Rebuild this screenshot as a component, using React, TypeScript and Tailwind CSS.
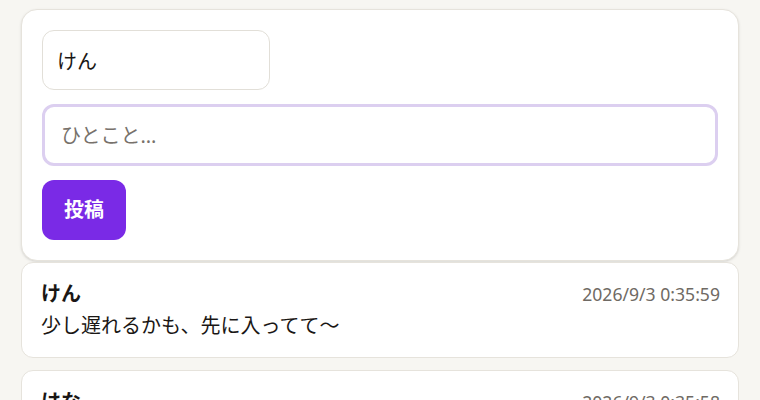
import React from 'react';

const posts = [
  { name: 'けん', time: '2026/9/3 0:35:59', text: '少し遅れるかも、先に入ってて〜' },
  { name: 'はな', time: '2026/9/3 0:35:58', text: 'おつかれさま！' },
];

const App = () => {
  return (
    <div
      className="min-h-screen bg-[#f7f6f2] px-[21px] pt-[9px] text-[#1a1715]"
      style={{ fontFamily: '"Noto Sans", "Noto Sans CJK JP", sans-serif' }}
    >
      <form className="flex flex-col gap-[14px] rounded-2xl border border-[#e6e3dc] bg-white p-5 shadow-sm">
        <input
          defaultValue="けん"
          className="h-[60px] w-[228px] rounded-xl border border-[#e2dfd8] px-[14px] text-[20px] outline-none"
        />
        <input
          placeholder="ひとこと..."
          className="h-[62px] w-full rounded-xl border-[3px] border-[#dccff0] px-4 text-[20px] outline-none placeholder:text-[#77716b]"
        />
        <button
          type="button"
          className="h-[60px] w-[84px] rounded-xl bg-[#7a2ae6] text-[20px] font-bold text-white"
        >
          投稿
        </button>
      </form>
      <div className="mt-px flex flex-col gap-3">
        {posts.map((p, i) => (
          <div key={i} className="flex flex-col rounded-xl border border-[#e6e3dc] bg-white pl-[19px] pr-[18px] py-[15px]">
            <div className="flex items-center justify-between">
              <span className="text-[20px] font-bold leading-8">{p.name}</span>
              <span className="text-[17.6px] text-[#6f6a64]">{p.time}</span>
            </div>
            <p className="text-[20px] leading-8">{p.text}</p>
          </div>
        ))}
      </div>
    </div>
  );
};

export default App;
